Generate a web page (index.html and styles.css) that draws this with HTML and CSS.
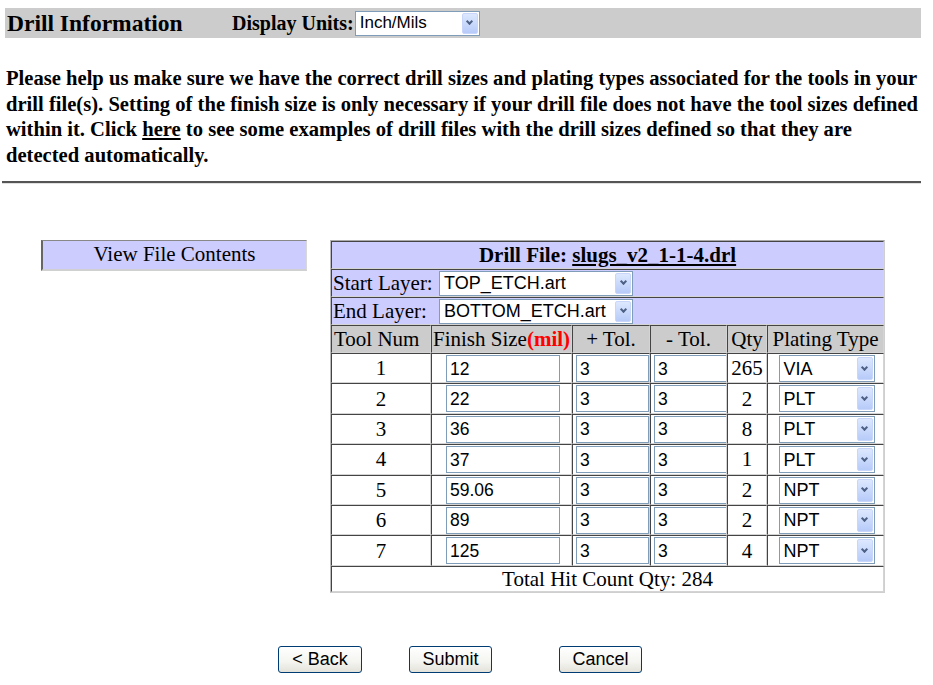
FILE: index.html
```html
<!DOCTYPE html>
<html>
<head>
<meta charset="utf-8">
<link rel="stylesheet" href="styles.css">
</head>
<body>
<div class="topbar">
  <span class="title">Drill Information</span>
  <span class="units-label">Display Units:</span>
  <span class="sel sel-units"><span class="sel-text">Inch/Mils</span><span class="sel-btn"><span class="chev"></span></span></span>
</div>
<p class="intro">Please help us make sure we have the correct drill sizes and plating types associated for the tools in your<br>drill file(s). Setting of the finish size is only necessary if your drill file does not have the tool sizes defined<br>within it. Click <a href="#">here</a> to see some examples of drill files with the drill sizes defined so that they are<br>detected automatically.</p>
<hr class="rule">
<div class="main">
  <div class="side">
    <div class="viewbox">View File Contents</div>
  </div>
  <table class="drill">
    <colgroup>
      <col class="c1"><col class="c2"><col class="c3"><col class="c4"><col class="c5"><col class="c6">
    </colgroup>
    <tr class="blue"><td colspan="6" class="fname">Drill File: <a href="#">slugs_v2_1-1-4.drl</a></td></tr>
    <tr class="blue"><td colspan="6"><div class="layer"><span class="llabel">Start Layer:</span><span class="sel sel-layer"><span class="sel-text">TOP_ETCH.art</span><span class="sel-btn"><span class="chev"></span></span></span></div></td></tr>
    <tr class="blue"><td colspan="6"><div class="layer"><span class="llabel">End Layer:</span><span class="sel sel-layer"><span class="sel-text">BOTTOM_ETCH.art</span><span class="sel-btn"><span class="chev"></span></span></span></div></td></tr>
    <tr class="head">
      <td>Tool Num</td><td>Finish Size<span class="mil">(mil)</span></td><td>+ Tol.</td><td>- Tol.</td><td>Qty</td><td>Plating Type</td>
    </tr>
    <tr class="row"><td>1</td><td class="fin"><span class="inp w-fin">12</span></td><td class="tol"><span class="inp w-tol">3</span></td><td class="tol"><span class="inp w-tol">3</span></td><td>265</td><td><span class="sel sel-plate"><span class="sel-text">VIA</span><span class="sel-btn"><span class="chev"></span></span></span></td></tr>
    <tr class="row"><td>2</td><td class="fin"><span class="inp w-fin">22</span></td><td class="tol"><span class="inp w-tol">3</span></td><td class="tol"><span class="inp w-tol">3</span></td><td>2</td><td><span class="sel sel-plate"><span class="sel-text">PLT</span><span class="sel-btn"><span class="chev"></span></span></span></td></tr>
    <tr class="row"><td>3</td><td class="fin"><span class="inp w-fin">36</span></td><td class="tol"><span class="inp w-tol">3</span></td><td class="tol"><span class="inp w-tol">3</span></td><td>8</td><td><span class="sel sel-plate"><span class="sel-text">PLT</span><span class="sel-btn"><span class="chev"></span></span></span></td></tr>
    <tr class="row"><td>4</td><td class="fin"><span class="inp w-fin">37</span></td><td class="tol"><span class="inp w-tol">3</span></td><td class="tol"><span class="inp w-tol">3</span></td><td>1</td><td><span class="sel sel-plate"><span class="sel-text">PLT</span><span class="sel-btn"><span class="chev"></span></span></span></td></tr>
    <tr class="row"><td>5</td><td class="fin"><span class="inp w-fin">59.06</span></td><td class="tol"><span class="inp w-tol">3</span></td><td class="tol"><span class="inp w-tol">3</span></td><td>2</td><td><span class="sel sel-plate"><span class="sel-text">NPT</span><span class="sel-btn"><span class="chev"></span></span></span></td></tr>
    <tr class="row"><td>6</td><td class="fin"><span class="inp w-fin">89</span></td><td class="tol"><span class="inp w-tol">3</span></td><td class="tol"><span class="inp w-tol">3</span></td><td>2</td><td><span class="sel sel-plate"><span class="sel-text">NPT</span><span class="sel-btn"><span class="chev"></span></span></span></td></tr>
    <tr class="row"><td>7</td><td class="fin"><span class="inp w-fin">125</span></td><td class="tol"><span class="inp w-tol">3</span></td><td class="tol"><span class="inp w-tol">3</span></td><td>4</td><td><span class="sel sel-plate"><span class="sel-text">NPT</span><span class="sel-btn"><span class="chev"></span></span></span></td></tr>
    <tr class="total"><td colspan="6">Total Hit Count Qty: 284</td></tr>
  </table>
</div>
<div class="buttons">
  <span class="btn b-back">&lt; Back</span>
  <span class="btn b-submit">Submit</span>
  <span class="btn b-cancel">Cancel</span>
</div>
</body>
</html>
```
FILE: styles.css
```css
html, body { margin: 0; padding: 0; background: #fff; }
body { font-family: "Liberation Serif", "Times New Roman", serif; color: #000; width: 933px; height: 685px; overflow: hidden; }

.topbar {
  margin: 8px 12px 0 5px;
  height: 30px;
  background: #cccccc;
  display: flex;
  align-items: center;
  font-weight: bold;
}
.title { font-size: 23.5px; margin-left: 2px; width: 225px; }
.units-label { font-size: 20px; margin-right: 1px; }

.sel {
  position: relative;
  display: inline-flex;
  align-items: center;
  background: #fff;
  border: 1px solid #7f9db9;
  box-sizing: border-box;
  font-family: "Liberation Sans", Arial, sans-serif;
  font-size: 18px;
  font-weight: normal;
  color: #000;
}
.sel-text { padding-left: 4px; white-space: nowrap; }
.sel-btn {
  position: absolute;
  right: 1px; top: 1px; bottom: 1px;
  width: 16px;
  background: linear-gradient(#dde8fe, #b7cbf9);
  border: 1px solid #c8d6fb;
  box-sizing: border-box;
  border-radius: 2px;
  display: flex; align-items: center; justify-content: center;
}
.chev {
  width: 3px; height: 3px;
  border-right: 2px solid #4d6185;
  border-bottom: 2px solid #4d6185;
  transform: rotate(45deg);
  margin-top: -3px;
}
.sel-units { width: 125px; height: 25px; font-size: 17px; }

.intro {
  margin: 28px 0 0 6px;
  font-size: 20.6px;
  font-weight: bold;
  line-height: 25.5px;
  white-space: nowrap;
}
.intro a { color: #000; }

.rule {
  margin: 13px 12px 0 2px;
  border: 0;
  border-top: 2px solid #555;
  border-bottom: 1px solid #e0e0e0;
  height: 0;
}

.main {
  display: flex;
  align-items: flex-start;
  margin-top: 56px;
  padding-left: 41px;
}
.side { width: 289px; }
.viewbox {
  width: 266px;
  height: 31px;
  box-sizing: border-box;
  background: #ccccff;
  border-top: 1px solid #888;
  border-left: 2px solid #666;
  border-right: 1px solid #d8d8d8;
  border-bottom: 2px solid #d0d0d0;
  font-size: 21px;
  text-align: center;
  line-height: 27px;
}

.drill {
  border-collapse: separate;
  border-spacing: 0;
  border: 1px solid #cfcfcf;
  border-top-color: #aaa;
  border-left-color: #bbb;
  width: 555px;
  table-layout: fixed;
  font-size: 21px;
}
.c1 { width: 100px; } .c2 { width: 141px; } .c3 { width: 78px; } .c4 { width: 77px; } .c5 { width: 40px; } .c6 { width: 117px; }
.drill td {
  border-top: 1px solid #444;
  border-left: 1px solid #444;
  border-right: 1px solid #d4d4d4;
  border-bottom: 1px solid #d4d4d4;
  padding: 0;
  text-align: center;
  white-space: nowrap;
  overflow: hidden;
  line-height: 24px;
}
.blue td { background: #ccccff; height: 26px; }
.fname { font-weight: bold; }
.fname a { color: #000; }
.layer { display: flex; align-items: center; height: 26px; }
.llabel { width: 106px; text-align: left; padding-left: 1px; }
.sel-layer { width: 194px; height: 25px; }
.head td { background: #cccccc; height: 26px; }
.head td:first-child { text-align: left; padding-left: 2px; }
.mil { color: #ff0000; font-weight: bold; }
.row td { height: 28.4px; }
.row td.fin { text-align: left; padding-left: 14px; }
.row td.tol { text-align: left; padding-left: 3px; }
.inp {
  display: inline-flex;
  align-items: center;
  box-sizing: border-box;
  height: 27px;
  border: 1px solid #7f9db9;
  background: #fff;
  font-family: "Liberation Sans", Arial, sans-serif;
  font-size: 17.5px;
  padding-left: 3px;
  vertical-align: middle;
}
.w-fin { width: 114px; }
.w-tol { width: 73px; }
.sel-plate { width: 96px; height: 27px; vertical-align: middle; margin-left: 2px; }
.total td { height: 23px; border-bottom: 1px solid #d4d4d4; }

.buttons {
  display: flex;
  margin-top: 53px;
  padding-left: 278px;
}
.btn {
  display: inline-flex;
  align-items: center;
  justify-content: center;
  box-sizing: border-box;
  width: 84px;
  height: 27px;
  border: 1px solid #003c74;
  border-radius: 3px;
  background: linear-gradient(#ffffff, #f4f4f0 60%, #e3e2da);
  font-family: "Liberation Sans", Arial, sans-serif;
  font-size: 18px;
  color: #000;
}
.b-submit { margin-left: 47px; width: 83px; }
.b-cancel { margin-left: 67px; width: 83px; }
```
